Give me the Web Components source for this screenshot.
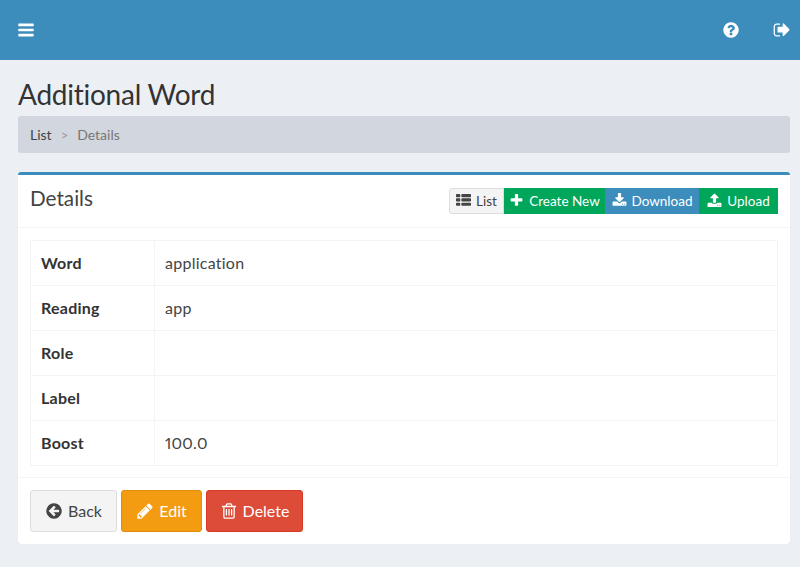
<!DOCTYPE html>
<html lang="en">
<head>
<meta charset="utf-8">
<title>Additional Word</title>
<style>
html, body { margin: 0; padding: 0; background: #ecf0f5; }
body { font-family: Lato, "Liberation Sans", sans-serif; font-size: 15px; color: #333; }
</style>
</head>
<body>
<app-page>
  <app-header slot="header"></app-header>
  <page-title>Additional Word</page-title>
  <bread-crumb current="Details">List</bread-crumb>
  <detail-box heading="Details">
    <tool-button slot="tools" kind="default" icon="list" style="width:55px">List</tool-button>
    <tool-button slot="tools" kind="success" icon="plus" style="width:101px">Create New</tool-button>
    <tool-button slot="tools" kind="primary" icon="download" style="width:94px">Download</tool-button>
    <tool-button slot="tools" kind="success" icon="upload" style="width:79px">Upload</tool-button>
    <detail-table>
      <detail-row label="Word">application</detail-row>
      <detail-row label="Reading">app</detail-row>
      <detail-row label="Role"></detail-row>
      <detail-row label="Label"></detail-row>
      <detail-row label="Boost">100.0</detail-row>
    </detail-table>
    <big-button slot="footer" kind="default" icon="back" style="width:87px">Back</big-button>
    <big-button slot="footer" kind="warning" icon="edit" style="width:81px">Edit</big-button>
    <big-button slot="footer" kind="danger" icon="trash" style="width:97px">Delete</big-button>
  </detail-box>
</app-page>

<script>
// font awesome 4 outlines, 1792 grid
const ICONS = {
    bars: "M1664 1344v128q0 26-19 45t-45 19H192q-26 0-45-19t-19-45v-128q0-26 19-45t45-19h1408q26 0 45 19t19 45zm0-512v128q0 26-19 45t-45 19H192q-26 0-45-19t-19-45V832q0-26 19-45t45-19h1408q26 0 45 19t19 45zm0-512v128q0 26-19 45t-45 19H192q-26 0-45-19t-19-45V320q0-26 19-45t45-19h1408q26 0 45 19t19 45z",
    help: "M1024 1376v-192q0-14-9-23t-23-9H800q-14 0-23 9t-9 23v192q0 14 9 23t23 9h192q14 0 23-9t9-23zm256-672q0-88-55.5-163T1087 425t-170-41q-243 0-371 213-15 24 8 42l132 100q7 6 19 6 16 0 25-12 53-68 86-92 34-24 86-24 48 0 85.5 26t37.5 59q0 38-20 61t-68 45q-63 28-115.5 86.5T768 1020v36q0 14 9 23t23 9h192q14 0 23-9t9-23q0-19 21.5-49.5T1100 957q32-18 49-28.5t46-35 44.5-48 28-60.5 12.5-81zm384 192q0 209-103 385.5T1281.5 1561 896 1664t-385.5-103T231 1281.5 128 896t103-385.5T510.5 231 896 128t385.5 103T1561 510.5 1664 896z",
    signout: "M704 1440q0 4 1 20t.5 26.5-3 23.5-10 19.5-20.5 6.5H352q-119 0-203.5-84.5T64 1248V544q0-119 84.5-203.5T352 256h320q13 0 22.5 9.5T704 288q0 4 1 20t.5 26.5-3 23.5-10 19.5-20.5 6.5H352q-66 0-113 47t-47 113v704q0 66 47 113t113 47h312l11.5 1 11.5 3 8 5.5 7 9 2 13.5zm928-544q0 26-19 45l-544 544q-19 19-45 19t-45-19-19-45v-288H512q-26 0-45-19t-19-45V640q0-26 19-45t45-19h448V288q0-26 19-45t45-19 45 19l544 544q19 19 19 45z",
    list: "M512 1248v192q0 40-28 68t-68 28H96q-40 0-68-28t-28-68v-192q0-40 28-68t68-28h320q40 0 68 28t28 68zm0-512v192q0 40-28 68t-68 28H96q-40 0-68-28T0 928V736q0-40 28-68t68-28h320q40 0 68 28t28 68zm1280 512v192q0 40-28 68t-68 28H736q-40 0-68-28t-28-68v-192q0-40 28-68t68-28h960q40 0 68 28t28 68zM512 224v192q0 40-28 68t-68 28H96q-40 0-68-28T0 416V224q0-40 28-68t68-28h320q40 0 68 28t28 68zm1280 512v192q0 40-28 68t-68 28H736q-40 0-68-28t-28-68V736q0-40 28-68t68-28h960q40 0 68 28t28 68zm0-512v192q0 40-28 68t-68 28H736q-40 0-68-28t-28-68V224q0-40 28-68t68-28h960q40 0 68 28t28 68z",
    plus: "M1600 736v192q0 40-28 68t-68 28h-416v416q0 40-28 68t-68 28H800q-40 0-68-28t-28-68v-416H288q-40 0-68-28t-28-68V736q0-40 28-68t68-28h416V224q0-40 28-68t68-28h192q40 0 68 28t28 68v416h416q40 0 68 28t28 68z",
    download: "M1344 1344q0-26-19-45t-45-19-45 19-19 45 19 45 45 19 45-19 19-45zm256 0q0-26-19-45t-45-19-45 19-19 45 19 45 45 19 45-19 19-45zm128-224v320q0 40-28 68t-68 28H160q-40 0-68-28t-28-68v-320q0-40 28-68t68-28h465l135 136q58 56 136 56t136-56l136-136h464q40 0 68 28t28 68zm-325-569q17 41-14 70l-448 448q-18 19-45 19t-45-19L403 621q-31-29-14-70 17-39 59-39h256V64q0-26 19-45t45-19h256q26 0 45 19t19 45v448h256q42 0 59 39z",
    upload: "M1344 1472q0-26-19-45t-45-19-45 19-19 45 19 45 45 19 45-19 19-45zm256 0q0-26-19-45t-45-19-45 19-19 45 19 45 45 19 45-19 19-45zm128-224v320q0 40-28 68t-68 28H160q-40 0-68-28t-28-68v-320q0-40 28-68t68-28h427q21 56 70.5 92t110.5 36h256q61 0 110.5-36t70.5-92h427q40 0 68 28t28 68zm-325-648q-17 40-59 40h-256v448q0 26-19 45t-45 19H768q-26 0-45-19t-19-45V640H448q-42 0-59-40-17-39 14-69l448-448q18-19 45-19t45 19l448 448q31 30 14 69z",
    back: "M1408 960V832q0-26-18.5-45t-45.5-19H842l189-189q19-19 19-45t-19-45l-91-91q-18-18-45-18t-45 18L488 760l-91 91q-18 18-18 45t18 45l91 91 362 362q18 18 45 18t45-18l91-91q18-18 18-45t-18-45l-189-189h502q26 0 45-19t19-45zm256-64q0 209-103 385.5T1281.5 1561 896 1664t-385.5-103T231 1281.5 128 896t103-385.5T510.5 231 896 128t385.5 103T1561 510.5 1664 896z",
    edit: "M491 1536l91-91-235-235-91 91v107h128v128h107zm523-928q0-22-22-22-10 0-17 7l-542 542q-7 7-7 17 0 22 22 22 10 0 17-7l542-542q7-7 7-17zm-54-192l416 416-832 832H128v-416zm683 96q0 53-37 90l-166 166-416-416 166-165q36-38 90-38 53 0 91 38l235 234q37 39 37 91z",
    trash: "M704 736v576q0 14-9 23t-23 9h-64q-14 0-23-9t-9-23V736q0-14 9-23t23-9h64q14 0 23 9t9 23zm256 0v576q0 14-9 23t-23 9h-64q-14 0-23-9t-9-23V736q0-14 9-23t23-9h64q14 0 23 9t9 23zm256 0v576q0 14-9 23t-23 9h-64q-14 0-23-9t-9-23V736q0-14 9-23t23-9h64q14 0 23 9t9 23zm128 724V512H448v948q0 22 7 40.5t14.5 27 10.5 8.5h832q3 0 10.5-8.5t14.5-27 7-40.5zM672 384h448l-48-117q-7-9-17-11H738q-10 2-17 11zm928 32v64q0 14-9 23t-23 9h-96v948q0 83-47 143.5t-113 60.5H480q-66 0-113-58.5T320 1464V512h-96q-14 0-23-9t-9-23v-64q0-14 9-23t23-9h309l70-167q15-37 54-63t79-26h320q40 0 79 26t54 63l70 167h309q14 0 23 9t9 23z"
}

const iconSvg = (name, size) =>
    `<svg width="${size}" height="${size}" viewBox="0 0 1792 1792" fill="currentColor" fill-rule="evenodd" aria-hidden="true"><path d="${ICONS[name]}"/></svg>`

class AppPage extends HTMLElement {
    constructor() {
        super()
        this.attachShadow({ mode: "open" }).innerHTML = `
<style>
:host { display: block; }
main { padding: 18px 10px 0 18px; }
</style>
<slot name="header"></slot>
<main><slot></slot></main>`
    }
}

class AppHeader extends HTMLElement {
    constructor() {
        super()
        this.attachShadow({ mode: "open" }).innerHTML = `
<style>
:host { display: flex; align-items: center; height: 60px; background: #3c8dbc; color: #fff; padding: 0 9px 0 17px; box-sizing: border-box; }
svg { display: block; }
.right { margin-left: auto; display: flex; gap: 33px; }
</style>
${iconSvg("bars", 18)}
<div class="right">${iconSvg("help", 18)}${iconSvg("signout", 18)}</div>`
    }
}

class PageTitle extends HTMLElement {
    constructor() {
        super()
        this.attachShadow({ mode: "open" }).innerHTML = `
<style>
:host { display: block; font-size: 28px; letter-spacing: -.25px; line-height: 32px; height: 38px; color: #333; }
</style>
<slot></slot>`
    }
}

class BreadCrumb extends HTMLElement {
    constructor() {
        super()
        this.attachShadow({ mode: "open" }).innerHTML = `
<style>
:host { display: flex; align-items: center; height: 37px; box-sizing: border-box; padding: 0 12px; background: #d2d6de; border-radius: 3px; font-size: 14px; color: #444; }
.sep { color: #999; padding: 0 9px; font-size: 13px; }
.cur { color: #777; }
</style>
<slot></slot><span class="sep">&gt;</span><span class="cur"></span>`
        this.shadowRoot.querySelector(".cur").textContent = this.getAttribute("current")
    }
}

class DetailBox extends HTMLElement {
    constructor() {
        super()
        this.attachShadow({ mode: "open" }).innerHTML = `
<style>
:host { display: block; margin-top: 19px; background: #fff; border-top: 3px solid #3c8dbc; border-radius: 3px; box-shadow: 0 1px 1px rgba(0,0,0,.1); }
header { display: flex; align-items: center; justify-content: space-between; height: 53px; box-sizing: border-box; padding: 0 12px; border-bottom: 1px solid #f4f4f4; }
h3 { margin: 0 0 6px; font-size: 20.7px; font-weight: 400; color: #444; }
.tools { display: flex; }
.body { padding: 12px 12px 11px; border-bottom: 1px solid #f4f4f4; }
footer { display: flex; gap: 4px; padding: 12px; }
</style>
<header><h3></h3><div class="tools"><slot name="tools"></slot></div></header>
<div class="body"><slot></slot></div>
<footer><slot name="footer"></slot></footer>`
        this.shadowRoot.querySelector("h3").textContent = this.getAttribute("heading")
    }
}

class DetailTable extends HTMLElement {
    constructor() {
        super()
        this.attachShadow({ mode: "open" }).innerHTML = `
<style>
:host { display: block; border: 1px solid #f4f4f4; border-bottom: 0; }
</style>
<slot></slot>`
    }
}

class DetailRow extends HTMLElement {
    constructor() {
        super()
        this.attachShadow({ mode: "open" }).innerHTML = `
<style>
:host { display: grid; grid-template-columns: 124px 1fr; height: 45px; box-sizing: border-box; border-bottom: 1px solid #f4f4f4; font-size: 16px; letter-spacing: .25px; color: #444; font-variant-numeric: proportional-nums; }
div { display: flex; align-items: center; padding: 0 10px 2px; }
.th { font-weight: 700; color: #333; border-right: 1px solid #f4f4f4; }
</style>
<div class="th"></div><div><slot></slot></div>`
        this.shadowRoot.querySelector(".th").textContent = this.getAttribute("label")
    }
}

const BUTTON_COLORS = `
:host([kind=default]) { background: #f4f4f4; border-color: #ddd; color: #444; }
:host([kind=success]) { background: #00a65a; border-color: #008d4c; color: #fff; }
:host([kind=primary]) { background: #3c8dbc; border-color: #367fa9; color: #fff; }
:host([kind=warning]) { background: #f39c12; border-color: #e08e0b; color: #fff; }
:host([kind=danger]) { background: #dd4b39; border-color: #d73925; color: #fff; }`

class ToolButton extends HTMLElement {
    constructor() {
        super()
        this.attachShadow({ mode: "open" }).innerHTML = `
<style>
:host { display: flex; align-items: center; justify-content: center; gap: 5px; height: 26px; box-sizing: border-box; padding-bottom: 1px; border: 1px solid transparent; font-size: 13.5px; }
:host(:first-child) { border-radius: 3px 0 0 3px; }
:host(:last-child) { border-radius: 0 3px 3px 0; }
svg { display: block; }
${BUTTON_COLORS}
:host([kind=success]), :host([kind=primary]) { border-color: transparent; }
</style>
${iconSvg(this.getAttribute("icon"), 15)}<slot></slot>`
    }
}

class BigButton extends HTMLElement {
    constructor() {
        super()
        this.attachShadow({ mode: "open" }).innerHTML = `
<style>
:host { display: flex; align-items: center; justify-content: center; gap: 5px; height: 42px; box-sizing: border-box; border: 1px solid transparent; border-radius: 3px; font-size: 16px; }
svg { display: block; }
span { padding-bottom: 2px; }
${BUTTON_COLORS}
</style>
${iconSvg(this.getAttribute("icon"), 18)}<span><slot></slot></span>`
    }
}

customElements.define("app-page", AppPage)
customElements.define("app-header", AppHeader)
customElements.define("page-title", PageTitle)
customElements.define("bread-crumb", BreadCrumb)
customElements.define("detail-box", DetailBox)
customElements.define("detail-table", DetailTable)
customElements.define("detail-row", DetailRow)
customElements.define("tool-button", ToolButton)
customElements.define("big-button", BigButton)
</script>
</body>
</html>
